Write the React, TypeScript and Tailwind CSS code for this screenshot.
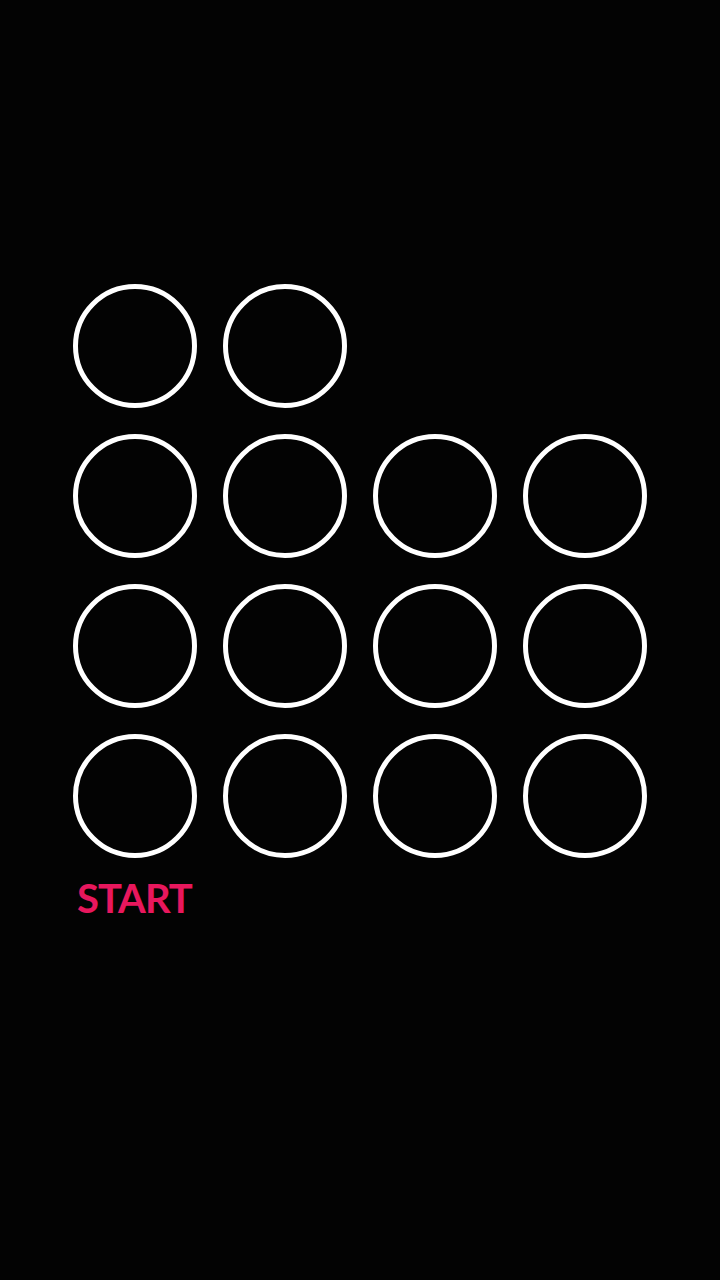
const rows = [2, 4, 4, 4];

function Ring() {
  return <div className="h-[124px] w-[124px] rounded-full border-[5px] border-white" />;
}

export default function App() {
  return (
    <div className="min-h-[1280px] w-[720px] bg-[#030303] pl-[73px] pt-[284px]">
      <div className="grid grid-cols-[repeat(4,124px)] gap-[26px]">
        {rows.map((count, r) =>
          Array.from({ length: 4 }).map((_, c) =>
            c < count ? <Ring key={`${r}-${c}`} /> : <div key={`${r}-${c}`} />
          )
        )}
      </div>
      <div className="mt-[20px] ml-[4px] font-['Lato',sans-serif] text-[40px] leading-[40px] font-bold tracking-[-1px] text-[#e8175d]">
        START
      </div>
    </div>
  );
}
